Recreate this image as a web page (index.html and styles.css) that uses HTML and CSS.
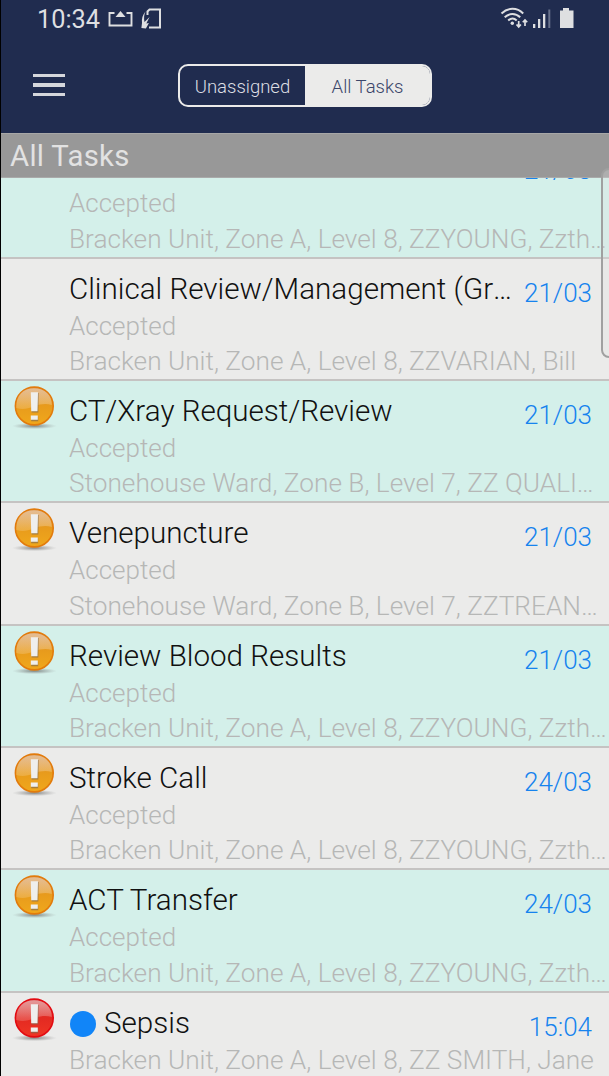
FILE: index.html
```
<!DOCTYPE html>
<html lang="en">
<head>
<meta charset="utf-8">
<title>All Tasks</title>
<link rel="stylesheet" href="styles.css">
</head>
<body>
<svg width="0" height="0" class="defs" aria-hidden="true">
  <defs>
    <linearGradient id="orange" x1="0" y1="0" x2="0" y2="1"><stop offset="0" stop-color="#d98b3c"/><stop offset=".5" stop-color="#e89b1c"/><stop offset="1" stop-color="#f0a81c"/></linearGradient>
    <linearGradient id="red" x1="0" y1="0" x2="0" y2="1"><stop offset="0" stop-color="#d84a4a"/><stop offset=".5" stop-color="#e32a22"/><stop offset="1" stop-color="#f03524"/></linearGradient>
    <linearGradient id="gloss" x1="0" y1="0" x2="0" y2="1"><stop offset="0" stop-color="#eee" stop-opacity=".5"/><stop offset="1" stop-color="#fff" stop-opacity=".16"/></linearGradient>
    <radialGradient id="shade"><stop offset="0" stop-color="#555" stop-opacity=".7"/><stop offset=".6" stop-color="#777" stop-opacity=".3"/><stop offset="1" stop-color="#999" stop-opacity="0"/></radialGradient>
    <g id="mark">
      <path d="M4.2 23C4 10 11 3.2 22 3.2S40 10 39.800 20C34 18.500 29 18.800 22 21.500S10 24.500 4.200 23z" fill="url(#gloss)"/>
      <path d="M19.200 8h7.500l-.4 19.500h-6.600zM19.200 31.500h7v4.700h-7z" fill="#7e6a50" opacity=".65"/>
      <path d="M18.800 7.200h7.200l-.5 19h-6.300zM18.800 30.500h7v4.300h-7z" fill="#efefed"/>
    </g>
    <symbol id="warn" viewBox="0 0 46 46"><ellipse cx="22.500" cy="41" rx="22.500" ry="3.200" fill="url(#shade)"/><circle cx="22.300" cy="21" r="18.900" fill="url(#orange)" stroke="#e27b0c" stroke-width="1.600"/><use href="#mark"/></symbol>
    <symbol id="urgent" viewBox="0 0 46 46"><ellipse cx="22.500" cy="41" rx="22.500" ry="3.200" fill="url(#shade)"/><circle cx="22.300" cy="21" r="18.900" fill="url(#red)" stroke="#e30b12" stroke-width="1.600"/><use href="#mark"/></symbol>
  </defs>
</svg>
<div class="app">
  <div class="status">
    <span class="clock">10:34</span>
    <svg class="cast" width="25" height="17" viewBox="0 0 25 17"><path d="M6.500 3H1.500v12.500h22V3h-5" fill="none" stroke="#dedfe1" stroke-width="1.900"/><path d="M7.500 7 12.500 1l5 6z" fill="#dedfe1"/></svg>
    <svg class="sync" width="21" height="22" viewBox="0 0 21 22"><path d="M6.500 7V3.500L8.500 1.500H19V19.500H8" fill="none" stroke="#dedfe1" stroke-width="2"/><path d="M4.500 3.500C1.500 7 .5 11 1 15l-.6 5 4.500.6 3-5.600-2.600.5L8.600 9 3.500 14C2.700 10 3 7 4.500 3.500z" fill="#dedfe1"/></svg>
    <svg class="signals" width="75" height="22" viewBox="0 0 75 22">
      <g fill="none" stroke="#dedfe1" stroke-width="2"><path d="M1.500 6.500C8 .2 17 .2 23.200 6.500M4.700 10.300c4.500-4.300 11-4.300 15.500 0M8.200 13.500c2.700-2.500 6-2.500 8.500 0"/><path d="M18.700 14v6M16.500 17.500l2.200 2.400 2.200-2.400M25 19v-6M22.800 15.300 25 12.900l2.200 2.400" stroke-width="1.700"/></g>
      <circle cx="12.300" cy="16.300" r="1.700" fill="#dedfe1"/>
      <path d="M33 17h2.300v4H33zM38 12h2.300v9H38zM43 7h2.300v14H43zM60 3.500h3V1h6v2.500h4.500V21H60z" fill="#dedfe1"/><path d="M48.300 2.500h2V21h-2z" fill="#69728c"/>
    </svg>
  </div>
  <div class="nav">
    <div class="menu"><i></i><i></i><i></i></div>
    <div class="segments"><span class="segment">Unassigned</span><span class="segment active">All Tasks</span></div>
  </div>
  <div class="heading">All Tasks</div>
  <div class="viewport">
    <div class="list">
      <div class="row mint"><div class="icon"></div><div class="top"><span class="title"></span><span class="date">21/03</span></div><div class="state">Accepted</div><div class="place">Bracken Unit, Zone A, Level 8, ZZYOUNG, Zzthomas</div></div>
      <div class="row"><div class="icon"></div><div class="top"><span class="title">Clinical Review/Management (Green)</span><span class="date">21/03</span></div><div class="state">Accepted</div><div class="place">Bracken Unit, Zone A, Level 8, ZZVARIAN, Bill</div></div>
      <div class="row mint"><div class="icon"><svg><use href="#warn"/></svg></div><div class="top"><span class="title">CT/Xray Request/Review</span><span class="date">21/03</span></div><div class="state">Accepted</div><div class="place narrow">Stonehouse Ward, Zone B, Level 7, ZZ QUALITY</div></div>
      <div class="row"><div class="icon"><svg><use href="#warn"/></svg></div><div class="top"><span class="title">Venepuncture</span><span class="date">21/03</span></div><div class="state">Accepted</div><div class="place">Stonehouse Ward, Zone B, Level 7, ZZTREANOR</div></div>
      <div class="row mint"><div class="icon"><svg><use href="#warn"/></svg></div><div class="top"><span class="title">Review Blood Results</span><span class="date">21/03</span></div><div class="state">Accepted</div><div class="place">Bracken Unit, Zone A, Level 8, ZZYOUNG, Zzthomas</div></div>
      <div class="row"><div class="icon"><svg><use href="#warn"/></svg></div><div class="top"><span class="title">Stroke Call</span><span class="date">24/03</span></div><div class="state">Accepted</div><div class="place">Bracken Unit, Zone A, Level 8, ZZYOUNG, Zzthomas</div></div>
      <div class="row mint"><div class="icon"><svg><use href="#warn"/></svg></div><div class="top"><span class="title">ACT Transfer</span><span class="date">24/03</span></div><div class="state">Accepted</div><div class="place">Bracken Unit, Zone A, Level 8, ZZYOUNG, Zzthomas</div></div>
      <div class="row"><div class="icon"><svg><use href="#urgent"/></svg></div><div class="top"><span class="title"><b class="dot"></b>Sepsis</span><span class="date">15:04</span></div><div class="place">Bracken Unit, Zone A, Level 8, ZZ SMITH, Jane</div></div>
    </div>
  </div>
  <div class="handle"></div>
</div>
</body>
</html>
```
FILE: styles.css
```
* { box-sizing: border-box; }
body { margin: 0; background: #000; font-family: Roboto, "Liberation Sans", sans-serif; }
.defs { position: absolute; }
.app { position: relative; display: flex; flex-direction: column; height: 1076px; margin-left: 1px; overflow: hidden; background: #ebebea; }
.status { display: flex; align-items: flex-start; height: 38px; padding: 7px 34px 0 36px; background: #202c4f; color: #dedfe1; }
.clock { width: 71px; font-size: 25.300px; line-height: 25px; white-space: nowrap; }
.cast { margin-top: 3px; }
.sync { margin: 1px 0 0 8px; }
.signals { margin-left: auto; }
.nav { display: flex; height: 95px; padding: 26px 0 0 31.500px; background: #202c4f; }
.menu { display: flex; flex-direction: column; gap: 6px; width: 32px; padding-top: 10px; }
.menu i { height: 3.300px; background: #d5d7dc; }
.segments { display: flex; width: 254px; height: 43px; margin-left: 113.500px; border: 2px solid #ebebea; border-radius: 10px; overflow: hidden; }
.segment { flex: 0 0 125px; color: #dcdee3; font-size: 18.500px; font-weight: 300; line-height: 42px; text-align: center; white-space: nowrap; }
.active { flex: 1; background: #ebebea; color: #3c476a; }
.heading { height: 45px; padding-left: 9px; border-top: 1px solid #a7a7a7; border-bottom: 1px solid #aaa; background: #989898; color: #e2e2e2; font-size: 29.300px; line-height: 44px; letter-spacing: .3px; }
.viewport { height: 898px; overflow: hidden; }
.list { margin-top: -41.700px; }
.row { display: grid; grid-template-columns: 68px 1fr; grid-template-rows: 49px 35.500px 36px; align-content: start; height: 122.330px; border-bottom: 2px solid #c5c3c2; font-weight: 300; }
.mint { background: #d4f0ea; }
.icon { grid-column: 1; grid-row: 1; padding: 4px 0 0 11px; }
.icon svg { display: block; width: 46px; height: 46px; }
.top { grid-column: 2; display: flex; min-width: 0; height: 49px; padding: 12px 17px 0 0; color: #111; font-size: 29.600px; line-height: 37px; }
.title { flex: 1; min-width: 0; overflow: hidden; text-overflow: ellipsis; white-space: nowrap; }
.date { margin: 4px 0 0 9px; color: #1683ee; font-size: 26px; }
.dot { display: inline-block; width: 26px; height: 26px; margin: 0 8px -4px 1px; border-radius: 50%; background: #1185f8; }
.state, .place { grid-column: 2; min-width: 0; overflow: hidden; color: #b6b7b6; font-size: 26px; line-height: 36px; white-space: nowrap; }
.place { font-size: 26.230px; text-overflow: ellipsis; }
.narrow { padding-right: 8px; }
.handle { position: absolute; top: 168px; left: 600px; width: 20px; height: 190px; border: 2px solid #a0a0a0; border-radius: 8px; background: rgba(225,225,225,.3); }
```
